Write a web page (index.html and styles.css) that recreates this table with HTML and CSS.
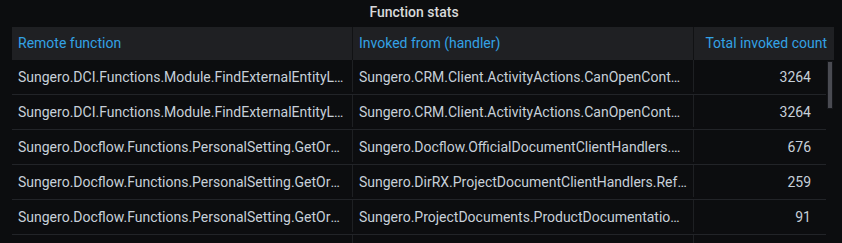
FILE: index.html
```html
<!DOCTYPE html>
<html>
<head>
<meta charset="utf-8">
<link rel="stylesheet" href="styles.css">
</head>
<body>
<div class="panel">
  <div class="title">Function stats</div>
  <div class="table">
    <div class="thead">
      <div class="th c1">Remote function</div>
      <div class="th c2">Invoked from (handler)</div>
      <div class="th c3 num">Total invoked count</div>
    </div>
    <div class="tbody">
      <div class="tr">
        <div class="td c1">Sungero.DCI.Functions.Module.FindExternalEntityLinks</div>
        <div class="td c2">Sungero.CRM.Client.ActivityActions.CanOpenContact</div>
        <div class="td c3 num">3264</div>
      </div>
      <div class="tr">
        <div class="td c1">Sungero.DCI.Functions.Module.FindExternalEntityLinks</div>
        <div class="td c2">Sungero.CRM.Client.ActivityActions.CanOpenContact</div>
        <div class="td c3 num">3264</div>
      </div>
      <div class="tr">
        <div class="td c1">Sungero.Docflow.Functions.PersonalSetting.GetOrCreate</div>
        <div class="td c2">Sungero.Docflow.OfficialDocumentClientHandlers.Showing</div>
        <div class="td c3 num">676</div>
      </div>
      <div class="tr">
        <div class="td c1">Sungero.Docflow.Functions.PersonalSetting.GetOrCreate</div>
        <div class="td c2">Sungero.DirRX.ProjectDocumentClientHandlers.Refresh</div>
        <div class="td c3 num">259</div>
      </div>
      <div class="tr">
        <div class="td c1">Sungero.Docflow.Functions.PersonalSetting.GetOrCreate</div>
        <div class="td c2">Sungero.ProjectDocuments.ProductDocumentationHandlers</div>
        <div class="td c3 num">91</div>
      </div>
      <div class="tr">
        <div class="td c1">Sungero.Docflow.Functions.PersonalSetting.GetOrCreate</div>
        <div class="td c2">Sungero.Docflow.OfficialDocumentClientHandlers.Refresh</div>
        <div class="td c3 num">84</div>
      </div>
      <div class="scrollthumb"></div>
    </div>
  </div>
</div>
</body>
</html>
```
FILE: styles.css
```css
html, body {
  margin: 0;
  padding: 0;
  background: #0c0d0f;
  font-family: Roboto, "Liberation Sans", sans-serif;
  overflow: hidden;
}
.panel {
  width: 842px;
  height: 243px;
  display: flex;
  flex-direction: column;
}
.title {
  height: 27px;
  line-height: 25px;
  width: 828px;
  text-align: center;
  font-size: 14px;
  font-weight: 500;
  color: #d8d9da;
}
.table {
  margin-left: 12px;
  width: 822px;
  display: flex;
  flex-direction: column;
}
.thead {
  display: flex;
  height: 33px;
  background: #1f2023;
}
.th {
  color: #33a2e5;
  font-size: 14px;
  line-height: 33px;
  padding: 0 6px;
  box-sizing: border-box;
  white-space: nowrap;
  border-right: 1px solid #111214;
}
.th.c3 { border-right: none; padding-right: 7px; }
.c1 { width: 341px; }
.c2 { width: 341px; }
.c3 { width: 140px; }
.num { text-align: right; }
.tbody {
  position: relative;
  height: 183px;
  overflow: hidden;
}
.tr {
  display: flex;
  width: 814px;
  height: 35px;
  box-sizing: border-box;
  border-bottom: 1px solid #222428;
  align-items: flex-start;
}
.td {
  height: 32px;
  line-height: 34px;
  font-size: 14px;
  color: #c7d0d9;
  padding: 0 6px;
  box-sizing: border-box;
  white-space: nowrap;
  overflow: hidden;
  text-overflow: ellipsis;
  border-right: 1px solid #1e2023;
}
.td.c3 {
  width: 132px;
  border-right: none;
  padding-right: 15px;
}
.scrollthumb {
  position: absolute;
  left: 815px;
  top: 1px;
  width: 6px;
  height: 48px;
  background: #4a4b52;
  border: 1px solid #15161a;
  box-sizing: border-box;
}
```
